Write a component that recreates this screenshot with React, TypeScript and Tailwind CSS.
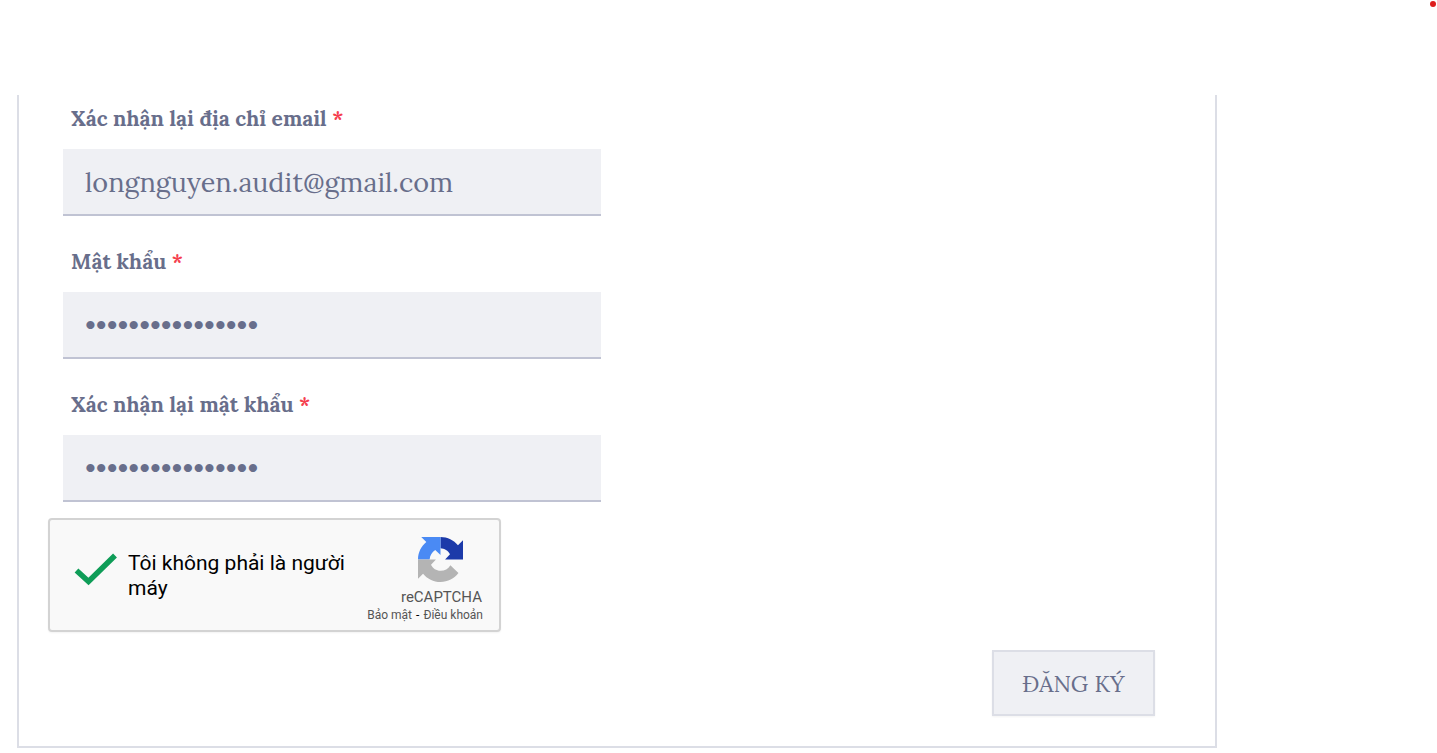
import React from "react";

const FIELDS = [
  { id: "confirm-email", label: "Xác nhận lại địa chỉ email", type: "email", value: "longnguyen.audit@gmail.com" },
  { id: "password", label: "Mật khẩu", type: "password", value: "matkhau-dangky-1" },
  { id: "confirm-password", label: "Xác nhận lại mật khẩu", type: "password", value: "matkhau-dangky-1" },
];

function CheckMark() {
  return (
    <svg viewBox="0 0 44 36" className="h-9 w-11 shrink-0" fill="none" aria-hidden="true">
      <path d="M2.5 19.5 L14.5 30.5 L41 4.5" stroke="#0f9d58" strokeWidth="5.5" />
    </svg>
  );
}

function RecaptchaLogo() {
  return (
    <svg viewBox="0 0 64 64" className="h-[45px] w-[45px]" aria-hidden="true">
      <path
        fill="#1c3aa9"
        d="M32 0C42 0 51 4.6 56.8 11.8L64 4.6V32H38.5L45.5 24.5C43 19.5 37.5 16.3 32 16Z"
      />
      <path
        fill="#4a8af4"
        d="M0 32C0 22 4.6 13 11.8 7.2L4.6 0H32V25.5L24.5 18.5C20 21 17 26.5 16.5 32Z"
      />
      <path
        fill="#b4b4b4"
        d="M0 32H25.5L18.5 39.5C21 45 26 48 32 48C38 48 43 45.5 46 40L57.5 51.3C51.7 59 42.4 64 32 64C22 64 13 59.4 7.2 52.2L0 59.4Z"
      />
    </svg>
  );
}

function Recaptcha() {
  return (
    <div className="mt-4 ml-[29px] flex h-[114px] w-[453px] items-start rounded-[4px] border-2 border-[#d3d3d3] bg-[#f9f9f9] pr-4 pl-6 font-['Roboto',sans-serif] shadow-xs">
      <label className="flex items-start pt-[31px] text-black">
        <input type="checkbox" defaultChecked className="sr-only" />
        <CheckMark />
        <span className="ml-2.5 w-[230px] text-[21px] leading-[25px]">Tôi không phải là người máy</span>
      </label>
      <div className="ml-auto flex flex-col items-end pt-[17px] whitespace-nowrap text-[#555555]">
        <div className="mr-5">
          <RecaptchaLogo />
        </div>
        <div className="mt-1.5 mr-px text-[15px] leading-[18px]">reCAPTCHA</div>
        <div className="flex gap-1 text-[12px] leading-[18px]">
          <a href="#privacy">Bảo mật</a>
          <span className="text-black">-</span>
          <a href="#terms">Điều khoản</a>
        </div>
      </div>
    </div>
  );
}

export default function App() {
  return (
    <div className="min-h-screen bg-white pt-[95px] font-['Lora','Liberation_Serif',serif] text-[#686e8b]">
      {/* Notification dot */}
      <span className="absolute top-px right-px h-[6px] w-[6px] rounded-full bg-[#dd1c1c]" />

      <form className="ml-[17px] max-w-[1200px] border-2 border-t-0 border-[#dcdee6] pb-[30px]">
        <div className="ml-11 flex w-[45%] flex-col gap-8 pt-2.5">
          {FIELDS.map((field) => (
            <div key={field.id}>
              <label htmlFor={field.id} className="mb-4 ml-2 block text-[21px] leading-7 font-bold">
                {field.label} <span className="text-[#f5404f]">*</span>
              </label>
              <input
                id={field.id}
                type={field.type}
                defaultValue={field.value}
                className="block h-[67px] w-full rounded-none border-b-2 border-[#c0c3d3] bg-[#eff0f4] px-[22px] text-[27px] outline-none"
              />
            </div>
          ))}
        </div>

        <Recaptcha />

        <div className="mt-[18px] mr-[60px] flex justify-end">
          <button
            type="button"
            className="h-[66px] w-[163px] border-2 border-[#dcdee6] bg-[#eff0f4] pt-0.5 text-[23px] shadow-xs"
          >
            ĐĂNG KÝ
          </button>
        </div>
      </form>
    </div>
  );
}
